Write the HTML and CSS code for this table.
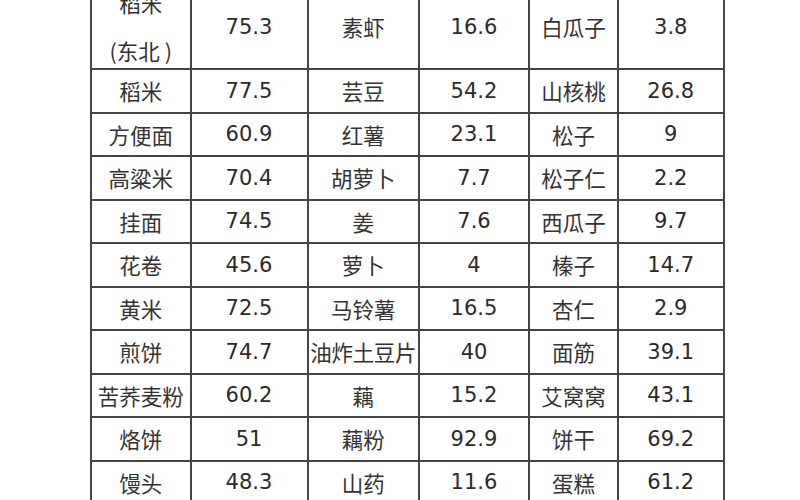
FILE: index.html
```html
<!DOCTYPE html>
<html lang="zh">
<head>
<meta charset="utf-8">
<title>食物表</title>
<link rel="stylesheet" href="styles.css">
</head>
<body>
<div class="table">
  <div class="cell name two-line">稻米<br>(东北 )</div><div class="cell num">75.3</div><div class="cell name">素虾</div><div class="cell num">16.6</div><div class="cell name">白瓜子</div><div class="cell num">3.8</div>
  <div class="cell name">稻米</div><div class="cell num">77.5</div><div class="cell name">芸豆</div><div class="cell num">54.2</div><div class="cell name">山核桃</div><div class="cell num">26.8</div>
  <div class="cell name">方便面</div><div class="cell num">60.9</div><div class="cell name">红薯</div><div class="cell num">23.1</div><div class="cell name">松子</div><div class="cell num">9</div>
  <div class="cell name">高粱米</div><div class="cell num">70.4</div><div class="cell name">胡萝卜</div><div class="cell num">7.7</div><div class="cell name">松子仁</div><div class="cell num">2.2</div>
  <div class="cell name">挂面</div><div class="cell num">74.5</div><div class="cell name">姜</div><div class="cell num">7.6</div><div class="cell name">西瓜子</div><div class="cell num">9.7</div>
  <div class="cell name">花卷</div><div class="cell num">45.6</div><div class="cell name">萝卜</div><div class="cell num">4</div><div class="cell name">榛子</div><div class="cell num">14.7</div>
  <div class="cell name">黄米</div><div class="cell num">72.5</div><div class="cell name">马铃薯</div><div class="cell num">16.5</div><div class="cell name">杏仁</div><div class="cell num">2.9</div>
  <div class="cell name">煎饼</div><div class="cell num">74.7</div><div class="cell name wide">油炸土豆片</div><div class="cell num">40</div><div class="cell name">面筋</div><div class="cell num">39.1</div>
  <div class="cell name">苦荞麦粉</div><div class="cell num">60.2</div><div class="cell name">藕</div><div class="cell num">15.2</div><div class="cell name">艾窝窝</div><div class="cell num">43.1</div>
  <div class="cell name">烙饼</div><div class="cell num">51</div><div class="cell name">藕粉</div><div class="cell num">92.9</div><div class="cell name">饼干</div><div class="cell num">69.2</div>
  <div class="cell name">馒头</div><div class="cell num">48.3</div><div class="cell name">山药</div><div class="cell num">11.6</div><div class="cell name">蛋糕</div><div class="cell num">61.2</div>
</div>
</body>
</html>
```
FILE: styles.css
```css
html, body {
  margin: 0;
  padding: 0;
  background: #ffffff;
  overflow: hidden;
  height: 500px;
}

.table {
  display: grid;
  grid-template-columns: 97.5px 115px 109.5px 108px 87px 103.5px;
  grid-template-rows: 83px;
  grid-auto-rows: 41.5px;
  gap: 2px;
  width: max-content;
  margin: -17px 0 0 90px;
  background: #444444;
  border: 2px solid #444444;
}

.cell {
  background: #ffffff;
  display: flex;
  align-items: center;
  justify-content: center;
  text-align: center;
  white-space: nowrap;
  color: #2a2a2a;
}

.name {
  font-family: "Noto Sans CJK SC", "Noto Sans", sans-serif;
  font-size: 21.5px;
  color: #333333;
}

.two-line {
  line-height: 48px;
}

.wide {
  letter-spacing: -0.3px;
}

.num {
  font-family: "DejaVu Sans", "Liberation Sans", sans-serif;
  font-size: 21px;
}
```
